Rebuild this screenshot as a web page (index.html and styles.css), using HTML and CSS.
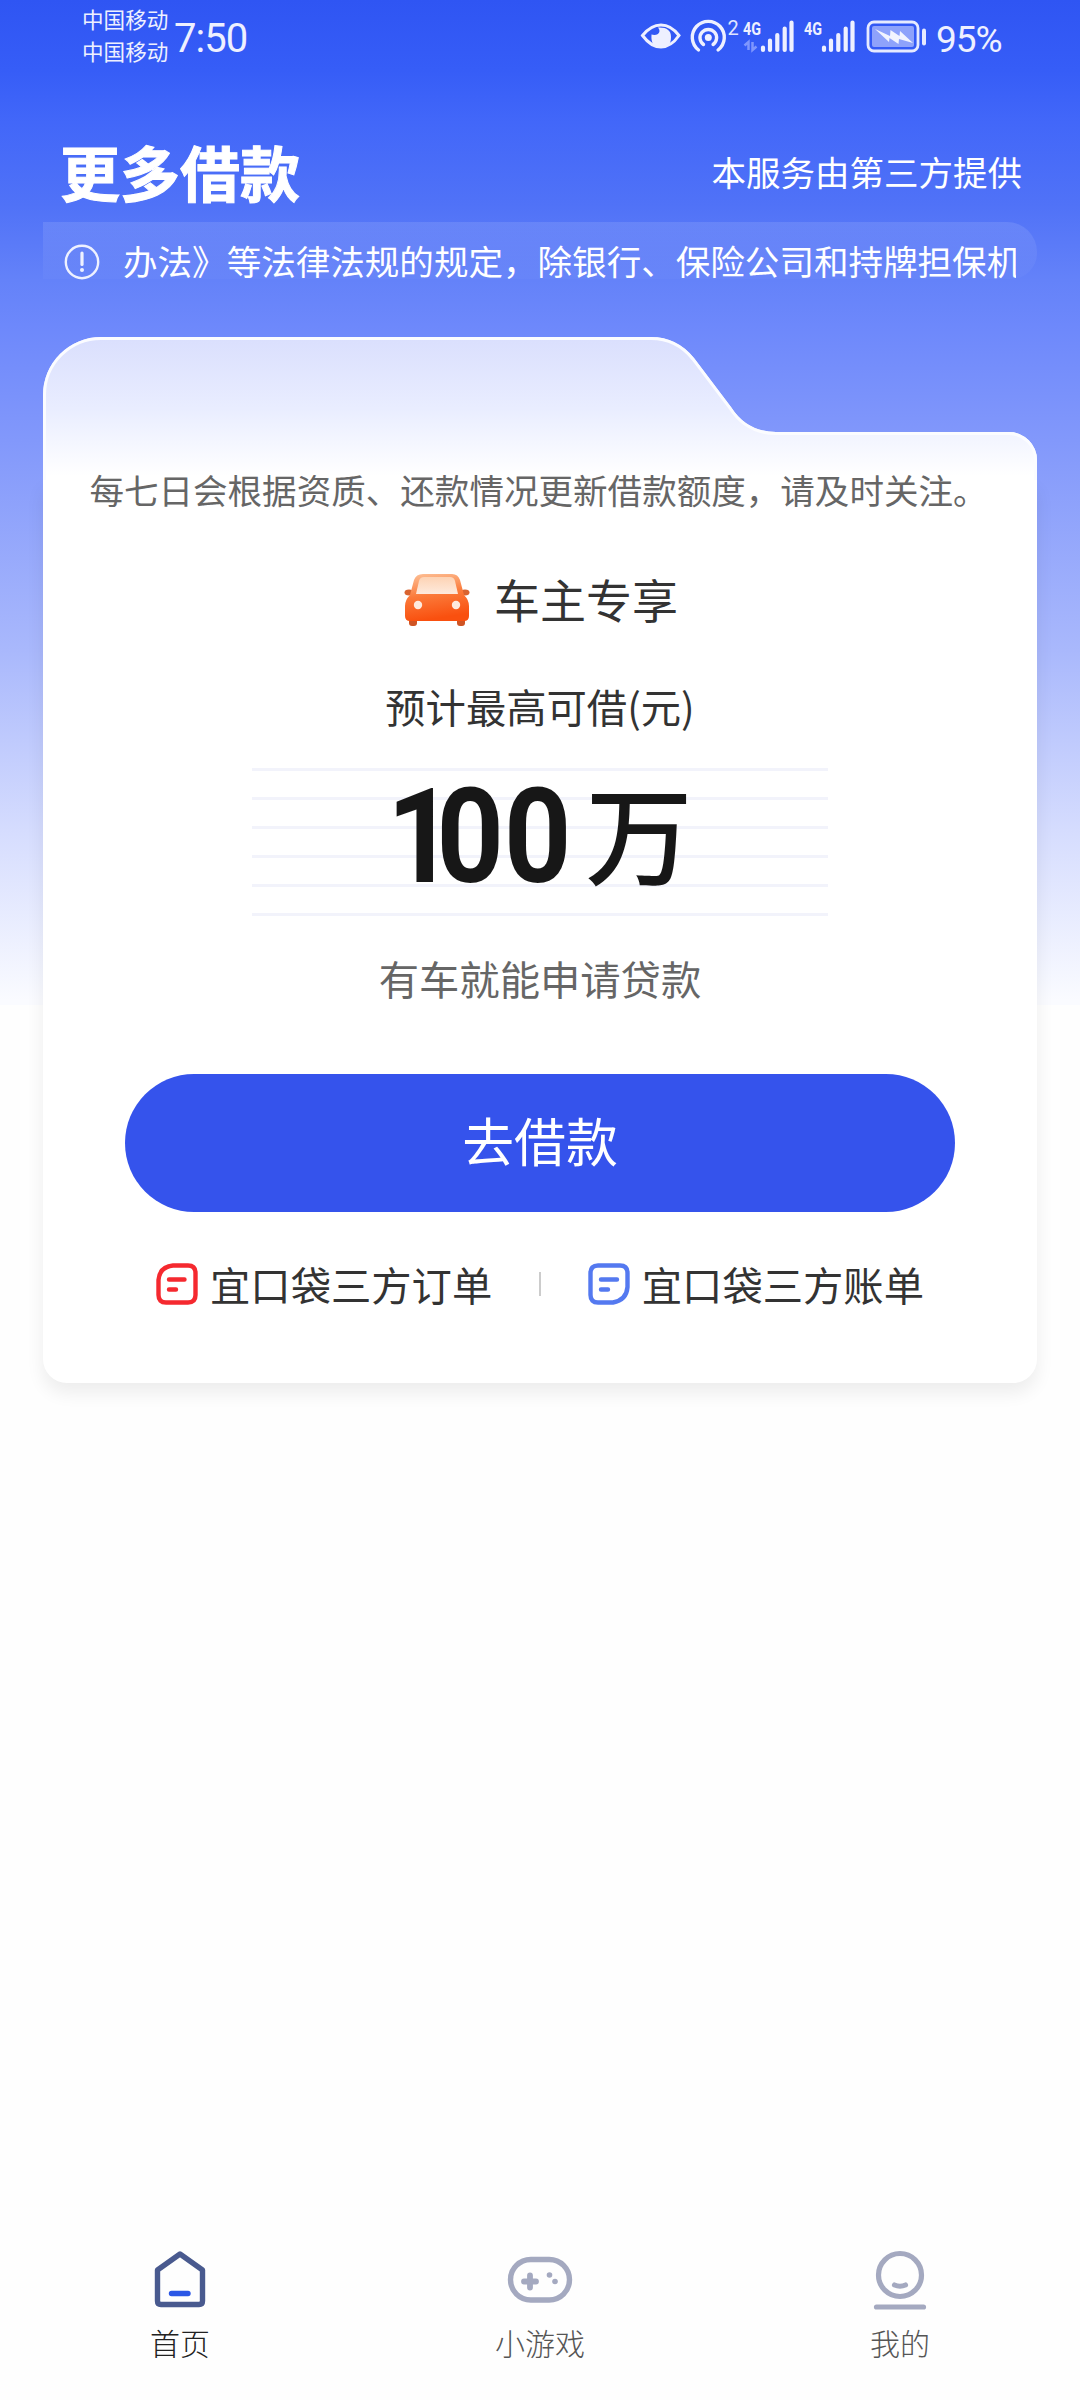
FILE: index.html
```html
<!DOCTYPE html>
<html lang="zh-CN">
<head>
<meta charset="utf-8">
<title>更多借款</title>
<link rel="stylesheet" href="styles.css">
</head>
<body>
<div class="screen">
  <div class="status">
    <div class="carriers"><span>中国移动</span><span>中国移动</span></div>
    <div class="time">7:50</div>
    <svg class="status-icons" viewBox="0 0 300 76" width="300" height="76">
      <path d="M13.500 35.500Q22 25 32 25t18 10.500Q42 47 32 47t-18.500-11.500z" fill="none" stroke="#eef0ff" stroke-width="3"/>
      <path d="M29 27.500q3 3.500 0 6.500q-3 1.500-6.500 .5q-1 13.500 9.500 13.500q10 0 10-11q0-10-13-9.500z" fill="#eef0ff"/>
      <circle cx="79.300" cy="37.500" r="3.500" fill="#eef0ff"/>
      <g fill="none" stroke="#eef0ff" stroke-width="3.400" stroke-linecap="round">
        <path d="M74.500 44.500a8.300 8.300 0 1 1 9.600 0"/>
        <path d="M69.500 50a16 16 0 1 1 19.600 0"/>
        <path d="M134 47.500v2.500M141 40.500v9.500M148.300 35v15M155.700 28.500v21.500M162.500 22.500v27.500" stroke-width="4.200"/>
        <path d="M195 47.500v2.500M202 40.500v9.500M209.300 35v15M216.700 28.500v21.500M223.500 22.500v27.500" stroke-width="4.200"/>
      </g>
      <path d="M119.500 50v-8l-4 3.500M123.500 42v8l4-3.500" fill="none" stroke="#7f96fd" stroke-width="2.500"/>
      <rect x="239" y="22" width="50" height="29" rx="6" fill="none" stroke="#e6eaff" stroke-width="2.800"/>
      <rect x="243" y="26" width="42" height="21" rx="2" fill="#8ea2fb"/>
      <path d="M246 29l15 7 .5-6 9 6 .5-5 13 12-14-4-.5 5-9-6-.5 4z" fill="#f2f4ff"/>
      <rect x="293" y="28.500" width="4" height="17" rx="2" fill="#e6eaff"/>
      <text class="t-hot" x="98.500" y="35">2</text>
      <text class="t-net" x="114" y="35" textLength="18" lengthAdjust="spacingAndGlyphs">4G</text>
      <text class="t-net" x="175" y="35" textLength="18" lengthAdjust="spacingAndGlyphs">4G</text>
    </svg>
    <div class="percent">95%</div>
  </div>

  <header class="header">
    <h1>更多借款</h1>
    <p>本服务由第三方提供</p>
  </header>

  <div class="notice">
    <svg width="36" height="36" viewBox="0 0 36 36">
      <circle cx="18" cy="18" r="16.200" fill="none" stroke="#eef1ff" stroke-width="2.400"/>
      <path d="M18 9v11.500" stroke="#eef1ff" stroke-width="3.200" stroke-linecap="round"/>
      <circle cx="18" cy="26" r="2" fill="#eef1ff"/>
    </svg>
    <div class="notice-text">办法》等法律法规的规定，除银行、保险公司和持牌担保机构外</div>
  </div>

  <main class="card">
    <svg class="card-tab" width="994" height="143" viewBox="0 0 994 143">
      <defs>
        <linearGradient id="tab" x1="0" y1="0" x2="0" y2="1">
          <stop offset="0" stop-color="#dadffd"/>
          <stop offset=".5" stop-color="#e9edff"/>
          <stop offset=".97" stop-color="#fff"/>
        </linearGradient>
        <clipPath id="tabClip"><path d="M0 143V58A58 58 0 0 1 58 0H608Q634 0 651 21L688 70Q704 95 733 95H966A28 28 0 0 1 994 123V143Z"/></clipPath>
      </defs>
      <path d="M0 143V58A58 58 0 0 1 58 0H608Q634 0 651 21L688 70Q704 95 733 95H966A28 28 0 0 1 994 123V143Z" fill="url(#tab)"/>
      <path clip-path="url(#tabClip)" d="M0 150V58A58 58 0 0 1 58 0H608Q634 0 651 21L688 70Q704 95 733 95H966A28 28 0 0 1 994 123V150" fill="none" stroke="#fbfcff" stroke-width="6"/>
    </svg>
    <div class="card-body">
      <p class="tip">每七日会根据资质、还款情况更新借款额度，请及时关注。</p>
      <div class="product">
        <svg width="66" height="54" viewBox="0 0 66 54">
          <defs>
            <linearGradient id="car" x1="0" y1="0" x2=".2" y2="1">
              <stop offset="0" stop-color="#fdc39a"/><stop offset=".5" stop-color="#fb7a3a"/><stop offset="1" stop-color="#f9500f"/>
            </linearGradient>
            <linearGradient id="glass" x1="0" y1="0" x2="0" y2="1">
              <stop offset="0" stop-color="#fdd3b4"/><stop offset="1" stop-color="#feeadd"/>
            </linearGradient>
          </defs>
          <rect x="5" y="45" width="8" height="8" rx="3" fill="#cf5424"/>
          <rect x="53" y="45" width="8" height="8" rx="3" fill="#cf5424"/>
          <ellipse cx="5" cy="19.500" rx="4.500" ry="3" fill="#d9632f"/>
          <ellipse cx="61" cy="19.500" rx="4.500" ry="3" fill="#d9632f"/>
          <path d="M19 1H48Q54 1 56 7L60 22Q65 27 65 33V43Q65 48 60 48H6Q1 48 1 43V33Q1 27 6 22L10 7Q12 1 19 1Z" fill="url(#car)"/>
          <path d="M20 4H46Q50 4 51 8L54 21H12L15 8Q16 4 20 4Z" fill="url(#glass)"/>
          <circle cx="14" cy="32" r="4.200" fill="#feeadd"/>
          <circle cx="52" cy="32" r="4.200" fill="#feeadd"/>
        </svg>
        <span>车主专享</span>
      </div>
      <p class="label">预计最高可借(元)</p>
      <div class="amount"><span class="num"><span class="one">1</span>00</span><span class="unit">万</span></div>
      <p class="slogan">有车就能申请贷款</p>
      <button class="cta">去借款</button>
      <div class="links">
        <a class="link">
          <svg width="42" height="42" viewBox="0 0 42 42" fill="none" stroke="#f5292f" stroke-width="4.400" stroke-linecap="round">
            <path d="M17 2.500H32Q39.500 2.500 39.500 10V32Q39.500 39.500 32 39.500H10Q2.500 39.500 2.500 32V17Q3.500 4 17 2.500Z"/>
            <path d="M13 16.500H28.500M13 26.500H20"/>
          </svg>
          <span>宜口袋三方订单</span>
        </a>
        <i class="divider"></i>
        <a class="link">
          <svg width="42" height="42" viewBox="0 0 42 42" fill="none" stroke="#5479f0" stroke-width="4.400" stroke-linecap="round">
            <path d="M10 2.500H32Q39.500 2.500 39.500 10V24Q38.500 37 25 39.500H10Q2.500 39.500 2.500 32V10Q2.500 2.500 10 2.500Z"/>
            <path d="M13 16.500H29M13 26.500H20"/>
          </svg>
          <span>宜口袋三方账单</span>
        </a>
      </div>
    </div>
  </main>

  <nav class="nav">
    <a class="nav-item active">
      <svg width="66" height="60" viewBox="0 0 66 60" fill="none" stroke-linecap="round" stroke-linejoin="round">
        <path d="M33 4L10.500 20V51Q10.500 54.500 14 54.500H52Q55.500 54.500 55.500 51V20Z" stroke="#495a8f" stroke-width="5.400"/>
        <path d="M24.500 43.500H41" stroke="#2b57e6" stroke-width="5.400"/>
      </svg>
      <span>首页</span>
    </a>
    <a class="nav-item">
      <svg width="66" height="60" viewBox="0 0 66 60" fill="none" stroke="#a4a9c0" stroke-linecap="round">
        <rect x="3.500" y="9.500" width="59" height="40.500" rx="20.250" stroke-width="5.400"/>
        <path d="M17 31.500H29M23 25.500V37.500" stroke-width="5.800"/>
        <circle cx="42.500" cy="25" r="2.800" fill="#a4a9c0" stroke="none"/>
        <circle cx="48" cy="31.500" r="2.800" fill="#a4a9c0" stroke="none"/>
      </svg>
      <span>小游戏</span>
    </a>
    <a class="nav-item">
      <svg width="66" height="60" viewBox="0 0 66 60" fill="none" stroke="#a4a9c0" stroke-width="5.200" stroke-linecap="round">
        <circle cx="33" cy="25" r="21.500"/>
        <path d="M27.500 35Q33 37.500 38.500 35"/>
        <path d="M9.500 57H56.500"/>
      </svg>
      <span>我的</span>
    </a>
  </nav>
</div>
</body>
</html>
```
FILE: styles.css
```css
* { box-sizing: border-box; margin: 0; padding: 0; }

body {
  width: 1080px;
  background: #fefefe;
  font-family: "Noto Sans CJK SC", sans-serif;
}

.screen {
  display: flex;
  flex-direction: column;
  width: 1080px;
  height: 2400px;
  overflow: hidden;
  background: linear-gradient(180deg, #2f55f3 0, #365df7 70px, #4267f9 122px, #5072f7 205px, #6482f9 280px, #6d88fb 325px, #8298fb 440px, #a9b8fc 650px, #d5dcfe 830px, #fafbff 1000px) 0 0 / 100% 1005px no-repeat #fefefe;
}

.status {
  display: flex;
  height: 76px;
  padding-left: 82px;
  color: #eef0ff;
}
.carriers {
  display: flex;
  flex-direction: column;
  width: 92px;
  padding-top: 3px;
  font-size: 21.6px;
  line-height: 32px;
  white-space: nowrap;
}
.time {
  width: 456px;
  font: 400 40px/78px Roboto, sans-serif;
  letter-spacing: -1px;
}
.status-icons { flex: none; margin-left: -1px; }
.percent {
  padding-left: 7px;
  font: 400 37px/79px Roboto, sans-serif;
  letter-spacing: -1px;
}
.t-hot { font: 400 20px Roboto, sans-serif; fill: #dfe4ff; }
.t-net { font: 700 19px Roboto, sans-serif; fill: #eef0ff; }

.header {
  display: flex;
  align-items: center;
  justify-content: space-between;
  height: 146px;
  padding: 44px 58px 0 60px;
  color: #fff;
}
.header h1 {
  font-size: 60px;
  font-weight: 700;
  line-height: 88px;
  -webkit-text-stroke: 1px #fff;
}
.header p { font-size: 34.5px; line-height: 50px; }

.notice {
  display: flex;
  gap: 23px;
  height: 57px;
  margin: 0 43px;
  padding: 22px 21px 0;
  border-radius: 0 30px 26px 0;
  background: linear-gradient(180deg, rgba(255, 255, 255, .11), rgba(255, 255, 255, .025));
  color: #fff;
}
.notice svg { flex: none; }
.notice-text {
  height: 50px;
  margin-top: -9px;
  overflow: hidden;
  white-space: nowrap;
  font-size: 34.56px;
  line-height: 50px;
}

.card { display: flex; flex-direction: column; margin: 58px 43px 0; }
.card-tab { display: block; position: relative; }
.card-body {
  display: flex;
  flex-direction: column;
  align-items: center;
  height: 903px;
  border-radius: 0 0 24px 24px;
  background: #fff;
  box-shadow: 0 10px 18px rgba(0, 0, 0, .07);
}
.tip {
  margin: -16px 3px 0 0;
  position: relative;
  font-size: 34.56px;
  line-height: 50px;
  color: #666;
}
.product {
  display: flex;
  align-items: center;
  gap: 24px;
  height: 66px;
  margin: 53px 0 0 2px;
  font-size: 46px;
  line-height: 60px;
  color: #333;
}
.product span { margin-top: -4px; }
.label { margin-top: 43px; font-size: 40.32px; line-height: 60px; color: #333; }
.amount {
  display: flex;
  align-items: flex-start;
  justify-content: center;
  width: 576px;
  height: 148px;
  margin-top: 32px;
  background: repeating-linear-gradient(180deg, #f2f3fb 0 3px, transparent 3px 29px);
  color: #171717;
}
.num {
  width: 198px;
  font: 700 132px/138px Roboto, sans-serif;
  transform: scaleX(.89);
  transform-origin: 0 50%;
}
.one { letter-spacing: -20px; }
.unit { font-size: 107px; font-weight: 500; line-height: 126px; }
.slogan { margin-top: 32px; font-size: 40.32px; line-height: 60px; color: #666; }
.cta {
  width: 830px;
  height: 138px;
  margin-top: 66px;
  padding-bottom: 6px;
  border: 0;
  border-radius: 69px;
  background: #3553ec;
  color: #fff;
  font: 400 51.84px/76px "Noto Sans CJK SC", sans-serif;
}
.links {
  display: flex;
  flex: none;
  align-items: center;
  justify-content: space-between;
  width: 768px;
  height: 60px;
  margin-top: 42px;
  color: #333;
}
.link { display: flex; align-items: center; gap: 12px; font-size: 40.32px; line-height: 60px; white-space: nowrap; }
.divider { flex: none; width: 2px; height: 24px; background: #ccc; }

.nav {
  display: grid;
  grid-template-columns: repeat(3, 1fr);
  margin-top: auto;
  height: 150px;
}
.nav-item {
  display: flex;
  flex-direction: column;
  align-items: center;
  font-size: 30px;
  font-weight: 300;
  line-height: 44px;
  color: #555;
}
.nav-item span { margin-top: 10px; }
.active { color: #222; }
```
